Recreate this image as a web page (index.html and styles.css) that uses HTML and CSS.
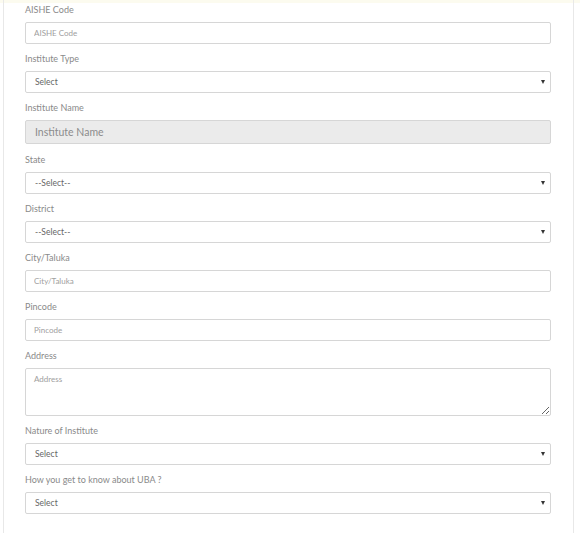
FILE: index.html
```html
<!DOCTYPE html>
<html>
<head>
    <title>Institute Registration</title>
    <link rel="stylesheet" href="styles.css">
</head>
<body>

<div class="top-strip"></div>
<div class="panel">
    <form class="reg-form">
        <div class="form-group">
            <label for="aishe">AISHE Code</label>
            <input type="text" id="aishe" placeholder="AISHE Code">
        </div>
        <div class="form-group">
            <label for="instType">Institute Type</label>
            <div class="select-wrap">
                <select id="instType"><option>Select</option></select>
            </div>
        </div>
        <div class="form-group wide">
            <label for="instName">Institute Name</label>
            <input type="text" id="instName" class="readonly" placeholder="Institute Name" readonly>
        </div>
        <div class="form-group">
            <label for="state">State</label>
            <div class="select-wrap">
                <select id="state"><option>--Select--</option></select>
            </div>
        </div>
        <div class="form-group">
            <label for="district">District</label>
            <div class="select-wrap">
                <select id="district"><option>--Select--</option></select>
            </div>
        </div>
        <div class="form-group">
            <label for="city">City/Taluka</label>
            <input type="text" id="city" placeholder="City/Taluka">
        </div>
        <div class="form-group">
            <label for="pin">Pincode</label>
            <input type="text" id="pin" placeholder="Pincode">
        </div>
        <div class="form-group">
            <label for="address">Address</label>
            <textarea id="address" placeholder="Address"></textarea>
        </div>
        <div class="form-group">
            <label for="nature">Nature of Institute</label>
            <div class="select-wrap">
                <select id="nature"><option>Select</option></select>
            </div>
        </div>
        <div class="form-group">
            <label for="source">How you get to know about UBA ?</label>
            <div class="select-wrap">
                <select id="source"><option>Select</option></select>
            </div>
        </div>
    </form>
</div>

</body>
</html>
```

FILE: styles.css
```css
body {
    font-family: Lato, "Open Sans", sans-serif;
    background-color: #fff;
    margin: 0;
    padding: 0;
}

/* тонкая желтоватая полоска сверху */
.top-strip {
    height: 3px;
    background-color: #fcfbef;
    margin-bottom: -3px;
}

.panel {
    margin-left: 3px;
    width: 571px;
    box-sizing: border-box;
    border-left: 1px solid #e8e8e8;
    border-right: 1px solid #e8e8e8;
    padding: 3px 22px 20px 21px;
    min-height: 540px;
}

.form-group {
    margin-bottom: 8px;
}

.form-group.wide {
    margin-bottom: 9px;
}

.form-group label {
    display: block;
    font-size: 9px;
    line-height: 14px;
    color: #8a8a8a;
    margin-bottom: 5px;
}

.form-group input[type="text"],
.form-group select,
.form-group textarea {
    display: block;
    width: 100%;
    height: 22px;
    box-sizing: border-box;
    border: 1px solid #d6d6d6;
    border-radius: 2px;
    background-color: #fff;
    font-family: Lato, "Open Sans", sans-serif;
    font-size: 8px;
    color: #666;
    padding: 0 8px;
    margin: 0;
    outline: none;
}

.form-group input::placeholder,
.form-group textarea::placeholder {
    color: #a0a0a0;
}

.form-group input.readonly {
    height: 24px;
    background-color: #ebebeb;
    font-size: 10.5px;
    padding-left: 9px;
}

.form-group input.readonly::placeholder {
    color: #8c8c8c;
}

.form-group textarea {
    height: 48px;
    padding: 5px 8px;
    resize: vertical;
}

.select-wrap {
    position: relative;
}

.form-group select {
    appearance: none;
    -webkit-appearance: none;
    padding-left: 9px;
    font-size: 8.5px;
}

/* стрелка селекта */
.select-wrap::after {
    content: "";
    position: absolute;
    right: 6px;
    top: 9px;
    border-left: 2.5px solid transparent;
    border-right: 2.5px solid transparent;
    border-top: 4px solid #333;
    pointer-events: none;
}
```
